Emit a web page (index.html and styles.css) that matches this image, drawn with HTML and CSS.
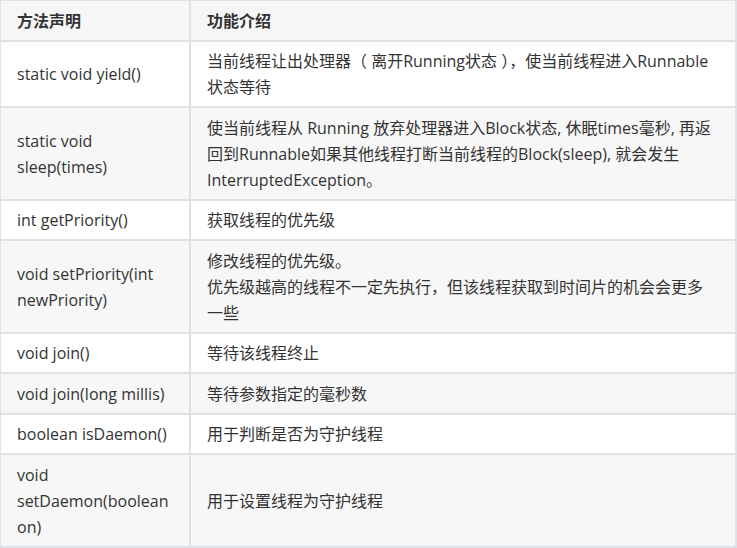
FILE: index.html
```html
<!DOCTYPE html>
<html lang="zh">
<head>
<meta charset="utf-8">
<link rel="stylesheet" href="styles.css">
</head>
<body>
<table class="api">
  <colgroup><col class="c1"><col class="c2"></colgroup>
  <thead>
    <tr><th>方法声明</th><th>功能介绍</th></tr>
  </thead>
  <tbody>
    <tr><td>static void yield()</td><td>当前线程让出处理器（ 离开Running状态 ），使当前线程进入Runnable状态等待</td></tr>
    <tr><td>static void sleep(times)</td><td>使当前线程从 Running 放弃处理器进入Block状态, 休眠times毫秒, 再返回到Runnable如果其他线程打断当前线程的Block(sleep), 就会发生InterruptedException。</td></tr>
    <tr><td>int getPriority()</td><td>获取线程的优先级</td></tr>
    <tr><td>void setPriority(int newPriority)</td><td>修改线程的优先级。<br>优先级越高的线程不一定先执行，但该线程获取到时间片的机会会更多一些</td></tr>
    <tr><td>void join()</td><td>等待该线程终止</td></tr>
    <tr><td>void join(long millis)</td><td>等待参数指定的毫秒数</td></tr>
    <tr><td>boolean isDaemon()</td><td>用于判断是否为守护线程</td></tr>
    <tr><td>void setDaemon(boolean on)</td><td>用于设置线程为守护线程</td></tr>
  </tbody>
</table>
</body>
</html>
```
FILE: styles.css
```css
html, body {
  margin: 0;
  padding: 0;
  background: #ffffff;
}
body {
  font-family: "Open Sans", "Noto Sans CJK SC", sans-serif;
  font-size: 16px;
  line-height: 26px;
  color: #333333;
}
.api {
  border-collapse: collapse;
  table-layout: fixed;
  width: 738px;
  margin: -1px 0 0 -1px;
}
.c1 { width: 190px; }
.api th, .api td {
  border: 2px solid #dfe2e5;
  padding: 6.5px 18px 6px 16px;
  text-align: left;
  vertical-align: middle;
  word-wrap: break-word;
}
.api th {
  font-weight: 700;
  background: #f6f6f6;
}
.api tbody tr:nth-child(even) td {
  background: #f7f7f7;
}
.api tbody tr:nth-child(odd) td {
  background: #ffffff;
}
```
